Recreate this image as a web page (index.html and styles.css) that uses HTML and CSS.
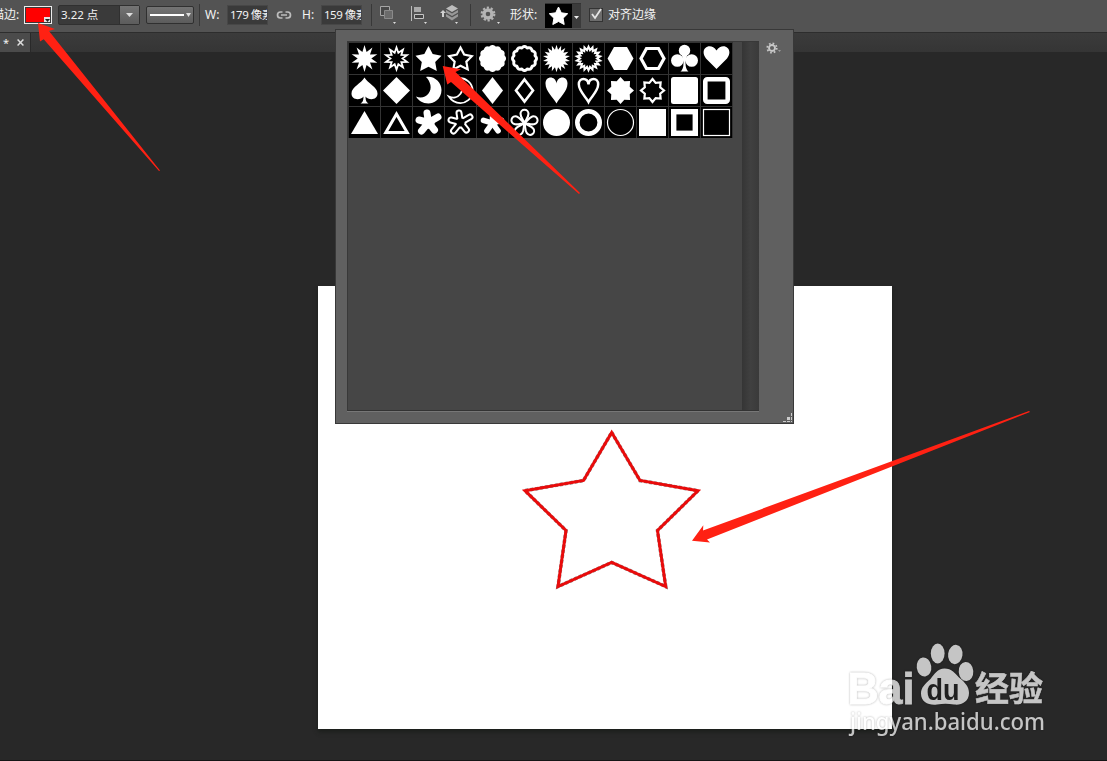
FILE: index.html
```html
<!DOCTYPE html>
<html lang="zh-CN">
<head>
<meta charset="utf-8">
<title>形状工具</title>
<link rel="stylesheet" href="styles.css">
</head>
<body>
<div class="app">
  <header class="toolbar">
    <span class="label stroke-label">描边:</span>
    <span class="swatch"><svg width="7" height="6" viewBox="0 0 7 6"><rect width="7" height="6" fill="#e4e4e4"/><path d="M1 2h5l-2.500 3z" fill="#222"/></svg></span>
    <div class="combo"><span class="combo-value">3.22 点</span><span class="combo-button"><svg width="7" height="4"><path d="M0 0h7L3.500 4z" fill="#ddd"/></svg></span></div>
    <div class="line-select"><span class="line"></span><svg width="5" height="4"><path d="M0 0h5L2.500 4z" fill="#ddd"/></svg></div>
    <i class="sep sep-a"></i>
    <span class="label w-label">W:</span>
    <span class="field">179 像素</span>
    <svg class="link" width="16" height="10" viewBox="0 0 16 10" fill="none" stroke="#bdbdbd" stroke-width="1.700"><path d="M6.500 2H4.500a3 3 0 0 0 0 6h2M9.500 2h2a3 3 0 0 1 0 6h-2M5 5h6"/></svg>
    <span class="label h-label">H:</span>
    <span class="field">159 像素</span>
    <i class="sep sep-b"></i>
    <svg class="tool" width="20" height="20" viewBox="0 0 20 20"><path d="M.5 1.500h9v9h-9z" fill="#484848" stroke="#a6a6a6"/><path d="M4.500 5.500h8v8h-8z" fill="#6b6b6b" stroke="#8a8a8a"/><path d="M13 17h3l-1.500 2z" fill="#ddd"/></svg>
    <svg class="tool tool-align" width="20" height="20" viewBox="0 0 20 20"><path d="M.5 1v15" stroke="#bbb"/><path d="M3 2h7v5H3z" fill="#aaa"/><path d="M3.500 9.500h9v4h-9z" fill="#444" stroke="#c5c5c5"/><path d="M13 17h3l-1.500 2z" fill="#ddd"/></svg>
    <svg class="tool tool-layers" width="22" height="20" viewBox="0 0 22 20"><path d="m12 0 6 3.500-6 3.500-6-3.500z" fill="#bcbcbc"/><path d="m6 5 6 3.500L18 5v2.500L12 11 6 7.500zM6 9l6 3.500L18 9v2.500L12 15.500l-6-4z" fill="#999"/><path d="m0 8 3-3 3 3H4v4H2V8z" fill="#d0d0d0"/><path d="M15 17h3l-1.500 2z" fill="#ddd"/></svg>
    <i class="sep sep-c"></i>
    <svg class="gear" width="20" height="20" viewBox="0 0 20 20"><g transform="translate(8 9)"><circle r="4" fill="none" stroke="#b4b4b4" stroke-width="3.400"/><circle r="6.300" fill="none" stroke="#b4b4b4" stroke-width="2.200" stroke-dasharray="2.200 1.758"/></g><path d="M17 17h3l-1.500 2z" fill="#ddd"/></svg>
    <span class="label shape-label">形状:</span>
    <div class="shape-select"><svg width="27" height="24" viewBox="-13.500 -12 27 24"><path d="m0-9 2.800 5.800 6.400.9-4.600 4.500 1.100 6.300L0 5.500l-5.700 3 1.100-6.300-4.600-4.500 6.400-.9z" fill="#fff" stroke="#fff" stroke-linejoin="round"/></svg><svg class="arrow" width="9" height="24"><path d="M2 12h5l-2.500 3z" fill="#eee"/></svg></div>
    <span class="check"><svg width="14" height="14" viewBox="0 0 14 14"><path d="m3 6 3 4 6-9" fill="none" stroke="#e4e4e4" stroke-width="1.800"/></svg></span>
    <span class="label">对齐边缘</span>
  </header>
  <nav class="tabs"><span class="tab"><span>*</span><svg width="7" height="7" viewBox="0 0 6 6"><path d="m.5.500 5 5m0-5-5 5" stroke="#ddd" stroke-width="1.300"/></svg></span></nav>
  <main class="workspace">
    <div class="document">
      <svg width="574" height="443" viewBox="318 286 574 443"><path d="M611.700 432.500 640 480.500 698 490.700 657.500 530.500 665.700 586.500 611.700 562.500 558 586.500 566 530.500 525 490.700 583.500 480.500z" fill="none" stroke="#888" stroke-width="3.600" stroke-dasharray="3 2"/><path d="M611.700 432.500 640 480.500 698 490.700 657.500 530.500 665.700 586.500 611.700 562.500 558 586.500 566 530.500 525 490.700 583.500 480.500z" fill="none" stroke="#e90b0b" stroke-width="3"/></svg>
    </div>
  </main>

  <section class="picker">
    <div class="picker-list">
      <div class="shapes" id="shapes"></div>
      <div class="scrollbar"></div>
    </div>
    <svg class="picker-gear" width="16" height="12" viewBox="0 0 16 12"><g transform="translate(6 6)" fill="none" stroke="#c8c8c8"><circle r="3" stroke-width="1.900"/><circle r="4.700" stroke-width="1.800" stroke-dasharray="1.700 1.991"/></g><path d="M12 8h3l-1.500 2z" fill="#999"/></svg>
    <svg class="grip" width="9" height="9"><path d="M8 0h1v3H8zM4 4h3v3H4zM8 4h1v3H8zM0 8h3v1H0zM4 8h3v1H4zM8 8h1v1H8z" fill="#ccc"/></svg>
  </section>

  <svg class="overlay" width="1107" height="761" viewBox="0 0 1107 761">
    <g fill="#ff2113">
      <path d="M38 23 55 29 49 31 160 170.500 159 171 43.700 39.300 40 41.500z"/>
      <path d="M442.700 66 461 69.300 455.500 72 580 193 579 194 451 82 447.300 84.500z"/>
      <path d="M692 540.700 703.300 525.300 703 530.500 1029 411 1030 412 707 539.500 710 542.500z"/>
    </g>
    <g class="watermark" fill="#fff">
      <text class="brand" x="847.500" y="703.500" textLength="67" lengthAdjust="spacingAndGlyphs">Bai</text>
      <ellipse cx="937.700" cy="653.500" rx="6.900" ry="9.900"/>
      <ellipse cx="955.300" cy="654.500" rx="7.200" ry="9.700" transform="rotate(8 955.300 654.500)"/>
      <ellipse cx="924" cy="667" rx="7.300" ry="9.600" transform="rotate(-8 924 667)"/>
      <ellipse cx="966" cy="671.500" rx="7.300" ry="9.600" transform="rotate(-4 966 671.500)"/>
      <path d="M944.500 668.500c7 0 11 5 14.500 9 6 5 10 9 10 15.500 0 9-8 12.500-15 11.500-6-1-11-1-17 0-8 1-16-2-16-11 0-6 4-9.500 9.500-14.500 4-5 7-10.500 14-10.500z"/>
      <text class="brand-du" x="926.500" y="699.500" textLength="33" lengthAdjust="spacingAndGlyphs">du</text>
      <text class="brand-cn" x="975" y="701" textLength="68" lengthAdjust="spacingAndGlyphs">经验</text>
      <text class="url" x="850" y="729.500" textLength="195" lengthAdjust="spacingAndGlyphs">jingyan.baidu.com</text>
    </g>
  </svg>
</div>
<script src="shapes.js"></script>
</body>
</html>
```

FILE: styles.css
```css
* { box-sizing: border-box; }
body { margin: 0; background: #282828; font: 12px/16px "Noto Sans", "Noto Sans CJK SC", sans-serif; color: #f2f2f2; }
.app { position: relative; width: 1107px; height: 761px; overflow: hidden; display: flex; flex-direction: column; }
svg { display: block; flex: none; }

.toolbar { height: 33px; flex: none; display: flex; align-items: center; padding-bottom: 2px; background: #535353; border-bottom: 1px solid #2d2d2d; white-space: nowrap; overflow: hidden; }
.toolbar > * { flex: none; }
.label { font-size: 12px; }
.stroke-label { margin-left: -8px; width: 32px; }
.swatch { width: 28px; height: 18px; background: #f00; border: 1px solid #ececec; outline: 1px solid #393939; outline-offset: -2px; display: flex; justify-content: flex-end; align-items: flex-end; }
.combo { margin-left: 6px; width: 82px; height: 20px; border: 1px solid #303030; border-radius: 2px; background: #3a3a3a; display: flex; }
.combo-value { flex: 1; padding-left: 2px; font-size: 11.5px; line-height: 18px; }
.combo-button { width: 20px; background: linear-gradient(#747474, #5c5c5c); border-left: 1px solid #303030; display: flex; align-items: center; justify-content: center; }
.line-select { margin-left: 6px; width: 48px; height: 18px; border: 1px solid #303030; border-radius: 2px; background: linear-gradient(#747474, #5c5c5c); display: flex; align-items: center; gap: 2px; padding-left: 3px; }
.line { width: 34px; height: 2px; background: #fff; }
.sep { width: 1px; height: 22px; background: #383838; }
.sep-a { margin-left: 5px; }
.w-label { margin-left: 5px; width: 22px; }
.field { width: 41px; height: 20px; padding-left: 2px; overflow: hidden; background: #3a3a3a; border: 1px solid #474747; font-size: 11.5px; line-height: 18px; letter-spacing: -.5px; }
.link { margin-left: 8px; }
.h-label { margin-left: 10px; width: 19px; }
.sep-b { margin-left: 9px; margin-right: 8px; }
.tool-align { margin-left: 11px; }
.tool-layers { margin-left: 9px; }
.sep-c { margin-left: 8px; }
.gear { margin-left: 9px; }
.shape-label { margin-left: 10px; width: 35px; }
.shape-select { width: 36px; height: 25px; display: flex; background: #000; border-top: 1px solid #333; }
.shape-select .arrow { background: #3b3b3b; }
.check { margin: 0 5px 0 8px; width: 14px; height: 14px; border: 1px solid #333; background: #6c6c6c; display: flex; align-items: center; justify-content: center; }

.tabs { height: 19px; flex: none; display: flex; background: linear-gradient(#3b3b3b, #353535); }
.tab { width: 31px; padding-left: 3px; display: flex; align-items: center; gap: 8px; background: #4b4b4b; border-right: 1px solid #292929; font-size: 11px; }
.workspace { flex: 1; padding: 234px 0 0 318px; border-bottom: 1px solid #151515; }
.document { width: 574px; height: 443px; background: #fff; box-shadow: 0 3px 4px #1c1f1c; }

.picker { position: absolute; left: 335px; top: 29px; width: 459px; height: 395px; padding: 11px 4px 0 11px; display: flex; justify-content: space-between; background: #606060; border: 1px solid #383838; }
.picker-list { width: 412px; height: 370px; display: flex; justify-content: space-between; background: #464646; border: 1px solid #383838; border-right: 0; border-bottom-color: #333; box-shadow: 0 1px #777; }
.shapes { display: grid; grid-template-columns: repeat(12, 31px); grid-auto-rows: 31px; gap: 1px; align-content: start; height: 96px; padding: 1px 1px 0; background: #333; }
.shapes svg { background: #000; }
.scrollbar { width: 17px; background: linear-gradient(90deg, #353535, #404040 50%, #3a3a3a); }
.picker-gear { margin: 1px 7px 0 0; }
.grip { position: absolute; right: 1px; bottom: 1px; }

.overlay { position: absolute; left: 0; top: 0; pointer-events: none; }
.watermark { opacity: .73; filter: drop-shadow(0 0 1px rgba(0, 0, 0, .4)); }
.brand { font: bold 44.5px "Liberation Sans", sans-serif; stroke: #fff; stroke-width: .8px; }
.brand-du { font: bold 29px "Liberation Sans", sans-serif; fill: #1c1c1c; }
.brand-cn { font: bold 34px "Noto Sans CJK SC", sans-serif; stroke: #fff; stroke-width: .5px; }
.url { font: 500 23px "Noto Sans", sans-serif; }
```

FILE: shapes.js
```js
// Builds the preset shape thumbnails, each centred on the origin.
const star = (n, outer, inner, offset = 0) => {
  const points = [];
  for (let i = 0; i < n * 2; i++) {
    const r = i % 2 ? inner : outer;
    const a = (i * Math.PI) / n - Math.PI / 2 + offset;
    points.push((r * Math.cos(a)).toFixed(2) + "," + (r * Math.sin(a)).toFixed(2));
  }
  return "M" + points.join("L") + "Z";
};
const wave = (n, radius, depth) => {
  const points = [];
  for (let i = 0; i < 180; i++) {
    const a = (i * Math.PI) / 90;
    const r = radius + depth * Math.abs(Math.cos((n * a) / 2));
    points.push((r * Math.sin(a)).toFixed(2) + "," + (-r * Math.cos(a)).toFixed(2));
  }
  return "M" + points.join("L") + "Z";
};
const solid = (d) => `<path d="${d}" fill="#fff"/>`;
const line = (d, w = 2.4) => `<path d="${d}" fill="none" stroke="#fff" stroke-width="${w}"/>`;
const box = (r, rx, attrs) => `<rect x="${-r}" y="${-r}" width="${2 * r}" height="${2 * r}" rx="${rx}" ${attrs}/>`;
const star5 = "M0-12.500 4.200-4.500 13-2.700 6.700 3.600 8.300 12.500 0 8.300-8.300 12.500-6.700 3.600-13-2.700-4.200-4.500Z";
const moon = "M-2.500-13.500C6-15 13-8 13-.5 13 9 5 13 0 13-6 13-10 10-12.500 6-8 8-3 7 0 3 4-2 2-9-2.500-13.500Z";
const heart = "M0 10.500-10.500 0C-18-10-6-17 0-8 6-17 18-10 10.500 0Z";
const narrowHeart = "M0 13C-3 7-11 1-11-7-11-15-1-15 0-7 1-15 11-15 11-7 11 1 3 7 0 13Z";
// Wide rounded arms are drawn in white; a thinner black pass hollows them out.
const arms = (d, w, color = "#fff") => `<path d="${d}" fill="none" stroke="${color}" stroke-width="${w}" stroke-linecap="round" stroke-linejoin="round"/>`;
const splash = "M0 0-1.500-9.500M0 0 9.500-5.500M0 0 6 7.500M0 0-7 8.500M0 0-9.500-2.500";
const petals = [0, 72, 144, 216, 288];
const petal = "M0 0C-1-3-4-6-4-9.500A4 4 0 0 1 4-9.500C4-6 1-3 0 0Z";
const flower = (render) => petals.map((a) => `<g transform="translate(0 .7) rotate(${a})">${render}</g>`).join("");

const shapes = [
  solid(star(10, 13.5, 6.8)),
  line(star(10, 11, 6), 1.8),
  solid(star5),
  `<g transform="scale(.87)">${line(star5, 2.5)}</g>`,
  solid(wave(12, 12.3, 1.2)),
  line(wave(12, 10.8, 1.2), 2.9),
  solid(star(18, 13.7, 9)),
  line(star(18, 11.8, 8.5), 2),
  solid("M-6.500-11.500H6.500L13 0 6.500 11.500H-6.500L-13 0Z"),
  line("M-6-10H6L11.500 0 6 10H-6L-11.500 0Z", 3.2),
  '<g fill="#fff"><circle cy="-8" r="5.700"/><circle cx="-7.200" cy="2" r="6.300"/><circle cx="7.200" cy="2" r="6.300"/><path d="M-3-5H3L1 4Q1 11 4 13H-4Q-1 11-1 4Z"/></g>',
  solid(heart),

  solid("M0-13C3-7 13-4 13 3 13 10 4 10 1 6 1 10 2 12 4 13H-4C-2 12-1 10-1 6-4 10-13 10-13 3-13-4-3-7 0-13Z"),
  solid("M0-13.500 13.500 0 0 13.500-13.500 0Z"),
  solid(moon),
  `<g transform="translate(0 .5) scale(.93)">${line(moon, 2)}</g>`,
  solid("M0-13.500 10.500 0 0 13.500-10.500 0Z"),
  line("M0-11 8.500 0 0 11-8.500 0Z", 2.6),
  solid(narrowHeart),
  `<g transform="scale(.88)">${line(narrowHeart, 2.8)}</g>`,
  solid(star(8, 13.5, 10)),
  line(star(8, 11.5, 8.3), 2.2),
  box(13.5, 2.5, 'fill="#fff"'),
  box(11.2, 2, 'fill="none" stroke="#fff" stroke-width="4.600"'),

  solid("M0-11.500 13.500 11.500H-13.500Z"),
  line("M0-8.500 10.700 10H-10.700Z", 3),
  arms(splash, 7) + '<circle r="6.300" fill="#fff"/>',
  arms(splash, 7) + '<circle r="6" fill="#fff"/>' + arms(splash, 3, "#000") + '<circle r="4" fill="#000"/>',
  flower(arms("M0 0V-9.500", 5.500)),
  flower(line(petal, 2.1)),
  '<circle r="13.500" fill="#fff"/>',
  '<circle r="11.200" fill="none" stroke="#fff" stroke-width="4.600"/>',
  '<circle r="13" fill="none" stroke="#fff" stroke-width="1.200"/>',
  box(13.5, 0, 'fill="#fff"'),
  box(10.8, 0, 'fill="none" stroke="#fff" stroke-width="5.400"'),
  box(13, 0, 'fill="none" stroke="#fff" stroke-width="1.200"')
];

document.getElementById("shapes").innerHTML = shapes
  .map((shape) => `<svg width="31" height="31" viewBox="-15.500 -15.500 31 31">${shape}</svg>`)
  .join("");
```
